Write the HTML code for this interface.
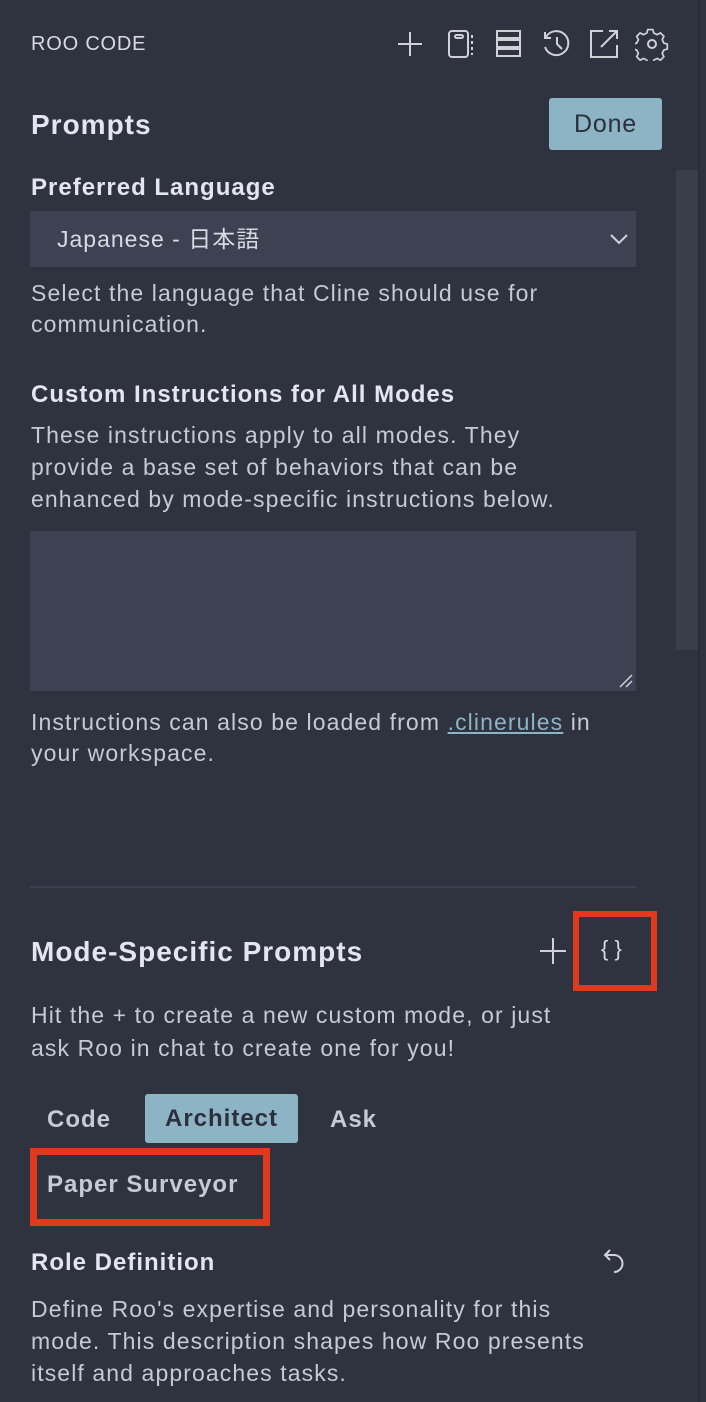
<!DOCTYPE html>
<html><head><meta charset="utf-8"><style>
*{margin:0;padding:0;box-sizing:border-box}
body{width:706px;height:1402px;background:#2f333f;color:#cfd3dc;font-family:"Liberation Sans","Noto Sans CJK JP",sans-serif;position:relative;overflow:hidden}
.a{position:absolute}
.t{font-size:23px;line-height:31px;color:#c6cad3;letter-spacing:1.1px;white-space:nowrap}
.h{font-weight:bold;color:#e3e6ee;letter-spacing:1px}
svg{position:absolute;stroke:#cfd2d8;fill:none;stroke-width:2}
</style></head><body>
<div class="a" style="left:676px;top:170px;width:22px;height:480px;background:#393e4b"></div>
<div class="a" style="left:698px;top:0;width:2px;height:1402px;background:#282c36"></div>
<div class="a" style="left:31px;top:33px;font-size:20px;color:#d8dbe2;letter-spacing:0.8px">ROO CODE</div>
<svg style="left:396px;top:30px" width="28" height="28"><path d="M14 2V26M2 14H26"/></svg>
<svg style="left:447px;top:29px" width="28" height="30"><rect x="2" y="2" width="19" height="26" rx="3"/><rect x="8" y="6" width="8" height="3" rx="1.5"/><path d="M25 6v3M25 12v3M25 18v3M25 24v2"/></svg>
<svg style="left:495px;top:29px" width="28" height="30"><rect x="2" y="2" width="23" height="7"/><rect x="2" y="11" width="23" height="7"/><rect x="2" y="20" width="23" height="7"/></svg>
<svg style="left:541px;top:29px" width="32" height="30"><path d="M5 8A12 12 0 1 1 4 18"/><path d="M4 3V9H10"/><path d="M16 8V15L21 20"/></svg>
<svg style="left:589px;top:29px" width="30" height="30"><path d="M14 2H2V28H28V16"/><path d="M12 18L28 2M20 2H28V10"/></svg>
<svg style="left:635px;top:27px" width="34" height="34"><path d="M14 2h6l1 4 4 2 4-2 4 4-2 4 2 4 4 1v6-0l-4 1-2 4 2 4-4 4-4-2-4 2-1 4h-6l-1-4-4-2-4 2-4-4 2-4-2-4-4-1v-6l4-1 2-4-2-4 4-4 4 2 4-2z" transform="scale(0.85) translate(1,1)"/><circle cx="17" cy="17" r="4"/></svg>
<div class="a h" style="left:31px;top:109px;font-size:28px">Prompts</div>
<div class="a" style="left:549px;top:98px;width:113px;height:52px;background:#8db4c4;border-radius:3px;color:#2b303c;font-size:25px;text-align:center;line-height:52px;letter-spacing:0.8px">Done</div>
<div class="a h" style="left:31px;top:174px;font-size:24px">Preferred Language</div>
<div class="a" style="left:30px;top:211px;width:606px;height:56px;background:#3d4253;font-size:23px;line-height:56px;padding-left:27px;color:#d8dbe2;letter-spacing:1px">Japanese - 日本語</div>
<svg style="left:608px;top:231px" width="22" height="16"><path d="M3 4L11 12L19 4"/></svg>
<div class="a t" style="left:31px;top:278px">Select the language that Cline should use for<br>communication.</div>
<div class="a h" style="left:31px;top:381px;font-size:24px">Custom Instructions for All Modes</div>
<div class="a t" style="left:31px;top:419px;line-height:32px">These instructions apply to all modes. They<br>provide a base set of behaviors that can be<br>enhanced by mode-specific instructions below.</div>
<div class="a" style="left:30px;top:531px;width:606px;height:160px;background:#3d4253"></div>
<svg style="left:618px;top:673px;stroke-width:1.5" width="16" height="16"><path d="M2 14L14 2M8 14L14 8"/></svg>
<div class="a t" style="left:31px;top:707px">Instructions can also be loaded from <span style="color:#8db4c4;text-decoration:underline">.clinerules</span> in<br>your workspace.</div>
<div class="a" style="left:30px;top:886px;width:606px;height:2px;background:#3d4253"></div>
<div class="a h" style="left:31px;top:936px;font-size:28px">Mode-Specific Prompts</div>
<svg style="left:539px;top:937px" width="28" height="28"><path d="M14 1V27M1 14H27"/></svg>
<div class="a" style="left:601px;top:936px;font-size:22px;color:#d8dbe2">{ }</div>
<div class="a" style="left:573px;top:911px;width:84px;height:80px;border:6px solid #e0391e"></div>
<div class="a t" style="left:31px;top:999px;line-height:33px">Hit the + to create a new custom mode, or just<br>ask Roo in chat to create one for you!</div>
<div class="a h" style="left:47px;top:1106px;font-size:24px;color:#c6cad3">Code</div>
<div class="a" style="left:145px;top:1094px;width:153px;height:49px;background:#8db4c4;border-radius:3px;color:#2b303c;font-size:24px;font-weight:bold;text-align:center;line-height:49px;letter-spacing:1px">Architect</div>
<div class="a h" style="left:330px;top:1106px;font-size:24px;color:#c6cad3">Ask</div>
<div class="a h" style="left:47px;top:1171px;font-size:24px;color:#c6cad3">Paper Surveyor</div>
<div class="a" style="left:30px;top:1148px;width:240px;height:78px;border:7px solid #e0391e"></div>
<div class="a h" style="left:31px;top:1249px;font-size:24px">Role Definition</div>
<svg style="left:602px;top:1248px" width="24" height="28"><path d="M8 2L3 7L8 12"/><path d="M3 7H12A8 8 0 0 1 12 24"/></svg>
<div class="a t" style="left:31px;top:1293px;line-height:32px">Define Roo's expertise and personality for this<br>mode. This description shapes how Roo presents<br>itself and approaches tasks.</div>
</body></html>
